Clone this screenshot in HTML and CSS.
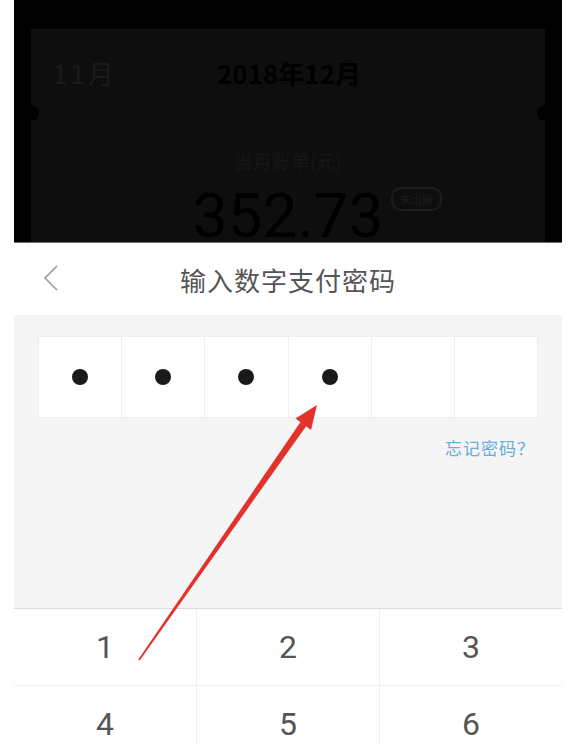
FILE: index.html
```html
<!DOCTYPE html>
<html>
<head>
<meta charset="UTF-8">
<title>输入数字支付密码</title>
<link rel="stylesheet" href="styles.css">
</head>
<body>
<div class="screen">
	<!-- dimmed bill page behind the sheet -->
	<div class="dim">
		<div class="card">
			<div class="months">
				<span class="prev">11月</span>
				<span class="cur">2018年12月</span>
			</div>
			<div class="label">当月账单(元)</div>
			<div class="amount">
				<span class="num">352.73</span>
				<span class="badge">未出账</span>
			</div>
		</div>
	</div>

	<!-- password sheet -->
	<div class="sheet-head">
		<svg class="back" width="16" height="26" viewBox="0 0 16 26">
			<polyline points="14,1 2,13 14,25" fill="none" stroke="#9a9a9a" stroke-width="1.6"/>
		</svg>
		<div class="title">输入数字支付密码</div>
		<div></div>
	</div>
	<div class="sheet-body">
		<div class="pwd">
			<div class="cell"><i class="dot"></i></div>
			<div class="cell"><i class="dot"></i></div>
			<div class="cell"><i class="dot"></i></div>
			<div class="cell"><i class="dot"></i></div>
			<div class="cell"></div>
			<div class="cell"></div>
		</div>
		<div class="forget">忘记密码？</div>
	</div>
	<div class="keypad">
		<div class="key">1</div>
		<div class="key">2</div>
		<div class="key">3</div>
		<div class="key">4</div>
		<div class="key">5</div>
		<div class="key">6</div>
	</div>
</div>

<!-- annotation arrow drawn over the screenshot -->
<svg class="arrow" width="570" height="744" viewBox="0 0 570 744">
	<polygon fill="#e3322b" points="139.7,660.5 306.3,426 300.5,422 138.3,659.5"/>
	<polygon fill="#e3322b" points="317,405 311,430 295.5,418.5"/>
</svg>
</body>
</html>
```

FILE: styles.css
```css
body {
	margin: 0;
	width: 570px;
	height: 744px;
	overflow: hidden;
	background: #ffffff;
	font-family: "Noto Sans CJK SC", "Noto Sans", sans-serif;
	position: relative;
}
.screen {
	width: 548px;
	margin-left: 14px;
}

/* dimmed background */
.dim {
	height: 243px;
	box-sizing: border-box;
	background: #000;
	padding: 29px 17px 0 17px;
	border-bottom: 1px solid #6f6f6f;
}
.card {
	position: relative;
	height: 100%;
	background: #0e0e0e;
	overflow: hidden;
}
.card:before, .card:after {
	content: "";
	position: absolute;
	top: 76px;
	width: 16px;
	height: 16px;
	border-radius: 50%;
	background: #000;
}
.card:before { left: -8px; }
.card:after { right: -8px; }
.months {
	display: flex;
	align-items: center;
	height: 30px;
	padding-top: 28px;
	padding-left: 22px;
}
.prev {
	font-size: 26px;
	color: #1a1a1a;
	width: 164px;
	letter-spacing: 3px;
}
.cur {
	font-size: 26px;
	font-weight: bold;
	color: #000;
}
.label {
	text-align: center;
	margin-top: 61px;
	font-size: 19px;
	line-height: 26px;
	color: #171717;
}
.amount {
	position: relative;
	text-align: center;
	margin-top: 11px;
}
.num {
	font-family: Roboto, "Liberation Sans", sans-serif;
	font-size: 62px;
	line-height: 62px;
	color: #000;
}
.badge {
	position: absolute;
	left: 360px;
	top: 2px;
	padding: 1px 7px;
	font-size: 11px;
	line-height: 18px;
	color: #1c1c1c;
	border: 2px solid #1c1c1c;
	border-radius: 10px;
}

/* sheet */
.sheet-head {
	display: grid;
	grid-template-columns: 60px 1fr 60px;
	align-items: center;
	height: 72px;
}
.back {
	margin-left: 29px;
	margin-top: -2px;
}
.title {
	text-align: center;
	font-size: 26px;
	color: #555;
	letter-spacing: 1px;
}
.sheet-body {
	height: 293px;
	box-sizing: border-box;
	background: #f5f5f5;
	padding: 21px 24px 0 24px;
}
.pwd {
	display: flex;
	height: 80px;
	background: #fff;
	border: 1px solid #eeeeee;
}
.cell {
	flex: 1;
	display: flex;
	align-items: center;
	justify-content: center;
	border-left: 1px solid #eeeeee;
}
.cell:first-child { border-left: none; }
.dot {
	width: 16px;
	height: 16px;
	border-radius: 50%;
	background: #1a1a1a;
}
.forget {
	text-align: right;
	margin-top: 18px;
	padding-right: 3px;
	font-size: 17px;
	line-height: 24px;
	color: #67ade0;
	letter-spacing: 1px;
}

/* keypad */
.keypad {
	display: grid;
	grid-template-columns: 183px 183px 182px;
	grid-auto-rows: 77px;
	border-top: 1px solid #dcdcdc;
}
.key {
	display: flex;
	align-items: center;
	justify-content: center;
	font-family: Roboto, "Liberation Sans", sans-serif;
	font-size: 32px;
	color: #555;
	border-right: 1px solid #eeeeee;
	border-bottom: 1px solid #eeeeee;
}
.key:nth-child(3n) { border-right: none; }

.arrow {
	position: absolute;
	left: 0;
	top: 0;
	pointer-events: none;
}
```
